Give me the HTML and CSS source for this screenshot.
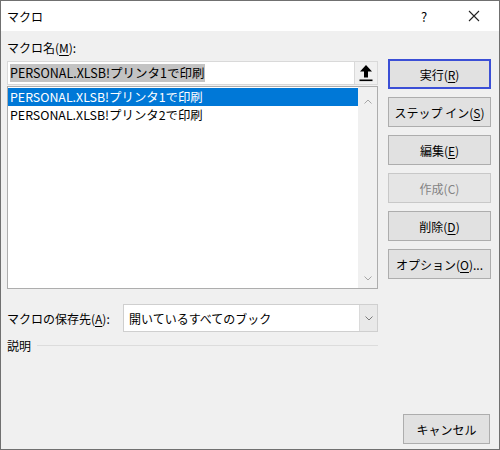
FILE: index.html
```html
<!DOCTYPE html>
<html lang="ja">
<head>
    <meta charset="UTF-8">
    <title>マクロ</title>
    <link rel="stylesheet" href="styles.css">
</head>
<body>
    <div class="window">
        <div class="titlebar">
            <span class="title">マクロ</span>
            <span class="help">?</span>
            <span class="close">
                <svg width="12" height="12" viewBox="0 0 12 12"><path d="M1 1 L11 11 M11 1 L1 11" stroke="#222" stroke-width="1.1" fill="none"/></svg>
            </span>
        </div>

        <div class="content">
            <div class="left">
                <div class="label">マクロ名(<u>M</u>):</div>
                <div class="name-input">
                    <span class="name-text"><span class="sel">PERSONAL.XLSB!プリンタ1で印刷</span></span>
                    <span class="up-btn">
                        <svg width="16" height="18" viewBox="0 0 16 18"><path d="M8 1 L14 7.5 L10 7.5 L10 13.5 L6 13.5 L6 7.5 L2 7.5 Z" fill="#000"/><rect x="1.5" y="15.5" width="13" height="1.6" fill="#000"/></svg>
                    </span>
                </div>
                <div class="listbox">
                    <div class="items">
                        <div class="item selected">PERSONAL.XLSB!プリンタ1で印刷</div>
                        <div class="item">PERSONAL.XLSB!プリンタ2で印刷</div>
                    </div>
                    <div class="scrollbar">
                        <svg width="8" height="5" viewBox="0 0 8 5"><path d="M0.5 4.5 L4 1 L7.5 4.5" stroke="#a6a6a6" fill="none"/></svg>
                        <svg width="8" height="5" viewBox="0 0 8 5"><path d="M0.5 0.5 L4 4 L7.5 0.5" stroke="#a6a6a6" fill="none"/></svg>
                    </div>
                </div>
                <div class="store-row">
                    <span class="store-label">マクロの保存先(<u>A</u>):</span>
                    <div class="select">
                        <span class="select-text">開いているすべてのブック</span>
                        <span class="select-arrow">
                            <svg width="8" height="5" viewBox="0 0 8 5"><path d="M0.5 0.5 L4 4 L7.5 0.5" stroke="#7a7a7a" fill="none"/></svg>
                        </span>
                    </div>
                </div>
                <div class="desc-row">
                    <span>説明</span>
                    <span class="desc-line"></span>
                </div>
            </div>

            <div class="buttons">
                <div class="btn default">実行(<u>R</u>)</div>
                <div class="btn">ステップ イン(<u>S</u>)</div>
                <div class="btn">編集(<u>E</u>)</div>
                <div class="btn disabled">作成(C)</div>
                <div class="btn">削除(<u>D</u>)</div>
                <div class="btn">オプション(<u>O</u>)...</div>
            </div>
        </div>

        <div class="footer">
            <div class="btn cancel">キャンセル</div>
        </div>
    </div>
</body>
</html>
```

FILE: styles.css
```css
body {
    margin: 0;
    padding: 0;
    font-family: 'Noto Sans CJK JP', 'Noto Sans', sans-serif;
    font-size: 12px;
    color: #000000;
}

u {
    text-decoration: underline;
    text-underline-offset: 2px;
}

.window {
    width: 500px;
    height: 450px;
    box-sizing: border-box;
    border: 1px solid #707070;
    background-color: #f0f0f0;
    display: flex;
    flex-direction: column;
}

.titlebar {
    height: 30px;
    background-color: #ffffff;
    display: flex;
    align-items: center;
    padding-left: 6px;
}

.title {
    flex: 1;
}

.help {
    width: 20px;
    text-align: center;
    margin-right: 34px;
    font-size: 13px;
}

.close {
    width: 14px;
    display: flex;
    margin-right: 17px;
}

.content {
    flex: 1;
    display: flex;
    padding: 0 0 0 6px;
}

.left {
    width: 371px;
    display: flex;
    flex-direction: column;
}

.label {
    margin-top: 8px;
    height: 18px;
    line-height: 18px;
}

.name-input {
    margin-top: 4px;
    height: 24px;
    box-sizing: border-box;
    border: 1px solid #d9d9d9;
    background-color: #ffffff;
    display: flex;
    align-items: stretch;
}

.name-text {
    flex: 1;
    display: flex;
    align-items: center;
    padding-left: 2px;
    font-size: 12.5px;
}

.sel {
    background-color: #c3c3c3;
    line-height: 18px;
    padding-right: 1px;
}

.up-btn {
    width: 22px;
    border-left: 1px solid #d9d9d9;
    background-color: #f0f0f0;
    display: flex;
    align-items: center;
    justify-content: center;
}

.listbox {
    margin-top: 1px;
    height: 203px;
    box-sizing: border-box;
    border: 1px solid #adadad;
    background-color: #ffffff;
    display: flex;
}

.items {
    flex: 1;
    padding-top: 1px;
}

.item {
    height: 18px;
    line-height: 18px;
    padding-left: 2px;
    font-size: 12.4px;
}

.item.selected {
    background-color: #0078d7;
    color: #ffffff;
}

.scrollbar {
    width: 19px;
    background-color: #f0f0f0;
    display: flex;
    flex-direction: column;
    justify-content: space-between;
    align-items: center;
    padding: 12px 0 7px;
}

.store-row {
    margin-top: 15px;
    display: flex;
    align-items: center;
}

.store-label {
    width: 116px;
    font-size: 12px;
}

.select {
    flex: 1;
    height: 28px;
    box-sizing: border-box;
    border: 1px solid #cfcfcf;
    background-color: #ffffff;
    display: flex;
}

.select-text {
    flex: 1;
    display: flex;
    align-items: center;
    padding-left: 5px;
}

.select-arrow {
    width: 17px;
    background-color: #e9e9e9;
    border-left: 1px solid #dadada;
    display: flex;
    align-items: center;
    justify-content: center;
}

.desc-row {
    margin-top: 4px;
    display: flex;
    align-items: center;
    height: 18px;
}

.desc-line {
    flex: 1;
    height: 1px;
    background-color: #dcdcdc;
    margin-left: 6px;
}

.buttons {
    margin-left: 10px;
    padding-top: 28px;
    display: flex;
    flex-direction: column;
    gap: 8px;
}

.btn {
    width: 103px;
    height: 30px;
    box-sizing: border-box;
    border: 1px solid #adadad;
    background-color: #e1e1e1;
    display: flex;
    align-items: center;
    justify-content: center;
    font-size: 12px;
}

.btn.default {
    border: 2px solid #3b4fd6;
}

.btn.disabled {
    color: #838383;
    border-color: #c8c8c8;
    background-color: #e5e5e5;
}

.footer {
    display: flex;
    justify-content: flex-end;
    padding: 0 9px 5px 0;
}

.btn.cancel {
    width: 87px;
    height: 30px;
}
```
